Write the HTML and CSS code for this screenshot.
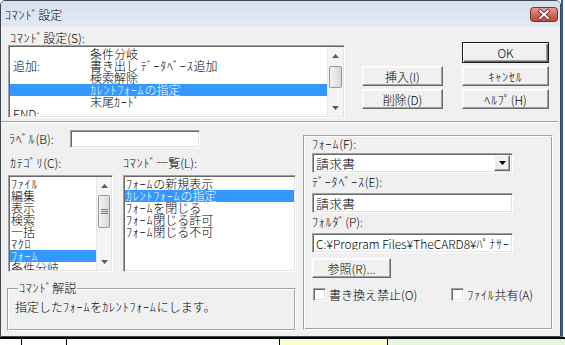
FILE: index.html
```html
<!DOCTYPE html>
<html lang="ja">
<head>
<meta charset="utf-8">
<title>ｺﾏﾝﾄﾞ設定</title>
<link rel="stylesheet" href="styles.css">
</head>
<body>
<div class="desktop">
  <div class="top-row">
    <div class="dialog">
      <div class="titlebar">
        <span class="title"><span class="hk">ｺﾏﾝﾄﾞ</span>設定</span>
        <span class="close">
          <svg width="28" height="15" viewBox="0 0 28 15">
            <defs>
              <linearGradient id="cg" x1="0" y1="0" x2="0" y2="1">
                <stop offset="0" stop-color="#e4a597"/>
                <stop offset="0.5" stop-color="#cf6a5c"/>
                <stop offset="1" stop-color="#c0493a"/>
              </linearGradient>
            </defs>
            <rect x="0.5" y="0.5" width="27" height="14" rx="3" fill="url(#cg)" stroke="#7d2f25"/>
            <path d="M10 4 L18 11 M18 4 L10 11" stroke="#5a1f18" stroke-width="3.4" stroke-linecap="square"/>
            <path d="M10 4 L18 11 M18 4 L10 11" stroke="#ffffff" stroke-width="2" stroke-linecap="square"/>
          </svg>
        </span>
      </div>
      <div class="client">
        <div class="upper">
          <div class="cmdset">
            <div class="lbl"><span class="hk">ｺﾏﾝﾄﾞ</span>設定(S):</div>
            <div class="listbox toplist">
              <div class="rows">
                <div class="row"><span class="c1"></span><span class="c2">条件分岐</span></div>
                <div class="row"><span class="c1">追加:</span><span class="c2">書き出し <span class="hk">ﾃﾞｰﾀﾍﾞｰｽ</span>追加</span></div>
                <div class="row"><span class="c1"></span><span class="c2">検索解除</span></div>
                <div class="row sel"><span class="c1"></span><span class="c2"><span class="hk">ｶﾚﾝﾄﾌｫｰﾑ</span>の指定</span></div>
                <div class="row"><span class="c1"></span><span class="c2">末尾<span class="hk">ｶｰﾄﾞ</span></span></div>
                <div class="row"><span class="c1">END:</span><span class="c2"></span></div>
              </div>
              <div class="vscroll">
                <div class="arrow up"><svg width="7" height="4" viewBox="0 0 7 4"><path d="M0 4 L3.5 0 L7 4 Z" fill="#5a5a5a"/></svg></div>
                <div class="track top-track1"></div>
                <div class="thumb"></div>
                <div class="track"></div>
                <div class="arrow down"><svg width="7" height="4" viewBox="0 0 7 4"><path d="M0 0 L3.5 4 L7 0 Z" fill="#5a5a5a"/></svg></div>
              </div>
            </div>
          </div>
          <div class="btncol btncol1">
            <div class="btn">挿入(I)</div>
            <div class="btn">削除(D)</div>
          </div>
          <div class="btncol btncol2">
            <div class="btn default">OK</div>
            <div class="btn"><span class="hk">ｷｬﾝｾﾙ</span></div>
            <div class="btn"><span class="hk">ﾍﾙﾌﾟ</span>(H)</div>
          </div>
        </div>
        <div class="sep"></div>
        <div class="lower">
          <div class="left">
            <div class="labelrow">
              <span class="lbl"><span class="hk">ﾗﾍﾞﾙ</span>(B):</span>
              <div class="field labelfield"></div>
            </div>
            <div class="lists">
              <div class="catcol">
                <div class="lbl"><span class="hk">ｶﾃｺﾞﾘ</span>(C):</div>
                <div class="listbox catlist">
                  <div class="rows">
                    <div class="row"><span class="hk">ﾌｧｲﾙ</span></div>
                    <div class="row">編集</div>
                    <div class="row">表示</div>
                    <div class="row">検索</div>
                    <div class="row">一括</div>
                    <div class="row"><span class="hk">ﾏｸﾛ</span></div>
                    <div class="row sel"><span class="hk">ﾌｫｰﾑ</span></div>
                    <div class="row">条件分岐</div>
                  </div>
                  <div class="vscroll">
                    <div class="arrow up"><svg width="7" height="4" viewBox="0 0 7 4"><path d="M0 4 L3.5 0 L7 4 Z" fill="#5a5a5a"/></svg></div>
                    <div class="track cat-track1"></div>
                    <div class="thumb grip"><span></span><span></span><span></span></div>
                    <div class="track"></div>
                    <div class="arrow down"><svg width="7" height="4" viewBox="0 0 7 4"><path d="M0 0 L3.5 4 L7 0 Z" fill="#5a5a5a"/></svg></div>
                  </div>
                </div>
              </div>
              <div class="cmdcol">
                <div class="lbl"><span class="hk">ｺﾏﾝﾄﾞ</span>一覧(L):</div>
                <div class="listbox cmdlist">
                  <div class="rows">
                    <div class="row"><span class="hk">ﾌｫｰﾑ</span>の新規表示</div>
                    <div class="row sel"><span class="hk">ｶﾚﾝﾄﾌｫｰﾑ</span>の指定</div>
                    <div class="row"><span class="hk">ﾌｫｰﾑ</span>を閉じる</div>
                    <div class="row"><span class="hk">ﾌｫｰﾑ</span>閉じる許可</div>
                    <div class="row"><span class="hk">ﾌｫｰﾑ</span>閉じる不可</div>
                  </div>
                </div>
              </div>
            </div>
            <fieldset class="desc">
              <legend><span class="hk">ｺﾏﾝﾄﾞ</span>解説</legend>
              <div class="desctext">指定した<span class="hk">ﾌｫｰﾑ</span>を<span class="hk">ｶﾚﾝﾄﾌｫｰﾑ</span>にします。</div>
            </fieldset>
          </div>
          <div class="panel">
            <div class="plbl"><span class="hk">ﾌｫｰﾑ</span>(F):</div>
            <div class="field combo">
              <span class="val">請求書</span>
              <span class="dd"><svg width="7" height="4" viewBox="0 0 7 4"><path d="M0 0 L3.5 4 L7 0 Z" fill="#000"/></svg></span>
            </div>
            <div class="plbl"><span class="hk">ﾃﾞｰﾀﾍﾞｰｽ</span>(E):</div>
            <div class="field pfield"><span class="val">請求書</span></div>
            <div class="plbl"><span class="hk">ﾌｫﾙﾀﾞ</span>(P):</div>
            <div class="field pfield path"><span class="val">C:¥Program Files¥TheCARD8¥<span class="hk">ﾊﾟﾅｻｰﾋﾞｽ</span></span></div>
            <div class="btn browse">参照(R)...</div>
            <div class="checks">
              <div class="check"><span class="box"></span><span>書き換え禁止(O)</span></div>
              <div class="check check2"><span class="box"></span><span><span class="hk">ﾌｧｲﾙ</span>共有(A)</span></div>
            </div>
          </div>
        </div>
      </div>
    </div>
    <div class="rightstrip"></div>
  </div>
  <div class="bottomstrip">
    <div class="cell c-a"></div>
    <div class="cell c-b"></div>
    <div class="cell c-c"></div>
    <div class="cell c-d"></div>
    <div class="cell c-e"></div>
  </div>
</div>
</body>
</html>
```

FILE: styles.css
```css
* { box-sizing: border-box; }
html, body { margin: 0; padding: 0; }
body {
  width: 565px;
  height: 345px;
  overflow: hidden;
  background: #ffffff;
  font-family: "Noto Sans CJK JP", "Noto Sans", sans-serif;
  font-size: 12px;
  font-weight: 300;
  line-height: 12px;
  color: #000;
}
.hk { letter-spacing: 0.8px; }
.desktop { width: 565px; height: 345px; display: flex; flex-direction: column; }
.top-row { display: flex; height: 337px; }

.dialog {
  width: 561px;
  height: 337px;
  border: 1px solid #404850;
  border-radius: 5px 5px 0 0;
  background: #f0f0f0;
  display: flex;
  flex-direction: column;
  overflow: hidden;
}
.titlebar {
  height: 26px;
  flex: none;
  display: flex;
  align-items: center;
  justify-content: space-between;
  padding: 1px 2px 0 4px;
  background: linear-gradient(#d7e1ed, #dde6f1 60%, #e3eaf3);
}
.title { font-size: 12px; color: #000; }
.close { display: flex; margin-right: 0; margin-top: -1px; }

.client { flex: 1; display: flex; flex-direction: column; }
.upper { height: 94px; display: flex; flex: none; }
.cmdset { margin-left: 7px; padding-top: 5px; width: 337px; }
.lbl { height: 12px; white-space: nowrap; }
.cmdset .lbl { margin-bottom: 1px; margin-left: 2px; }

.listbox {
  background: #fff;
  border: 1px solid;
  border-color: #a0a0a0 #ffffff #ffffff #a0a0a0;
  box-shadow: inset 1px 1px #696969, inset -1px -1px #e3e3e3;
  display: flex;
  overflow: hidden;
}
.rows { flex: 1; padding-top: 1px; overflow: hidden; }
.row { height: 12px; white-space: nowrap; display: flex; }
.row.sel { background: #3399ff; color: #fff; }

.toplist { height: 73px; padding: 1px; }
.toplist .c1 { width: 80px; padding-left: 3px; flex: none; }
.toplist .c2 { flex: none; }

.vscroll {
  width: 16px;
  flex: none;
  display: flex;
  flex-direction: column;
  background: #f4f4f4;
  border-left: 1px solid #e6e6e6;
}
.arrow { height: 17px; display: flex; align-items: center; justify-content: center; flex: none; }
.track { flex: 1; }
.top-track1 { flex: 0 0 2px; }
.thumb {
  flex: none;
  height: 22px;
  margin: 0 1px;
  border: 1px solid #979797;
  border-radius: 2px;
  background: linear-gradient(90deg, #f3f3f3, #e4e4e4 60%, #d6d6d6);
}
.cat-track1 { flex: 0 0 1px; }
.thumb.grip {
  height: 33px;
  display: flex;
  flex-direction: column;
  align-items: center;
  justify-content: center;
  gap: 1px;
}
.thumb.grip span { width: 7px; height: 1px; background: #7a7a7a; display: block; }

.btncol { display: flex; flex-direction: column; gap: 3px; }
.btncol1 { margin-left: 17px; width: 81px; padding-top: 39px; }
.btncol2 { margin-left: 19px; width: 87px; padding-top: 15px; }
.btn {
  height: 20px;
  display: flex;
  align-items: center;
  justify-content: center;
  background: #f0f0f0;
  border: 1px solid;
  border-color: #ffffff #696969 #696969 #ffffff;
  box-shadow: inset -1px -1px #a0a0a0, inset 1px 1px #f8f8f8;
  white-space: nowrap;
  padding-top: 1px;
}
.btn.default {
  height: 21px;
  border-color: #1a1a1a;
  box-shadow: inset 1px 1px #ffffff, inset -1px -1px #696969, inset -2px -2px #a0a0a0;
}

.sep {
  height: 2px;
  flex: none;
  border-top: 1px solid #a0a0a0;
  border-bottom: 1px solid #ffffff;
  margin-right: 2px;
}

.lower { flex: 1; display: flex; }
.left { margin-left: 7px; width: 288px; display: flex; flex-direction: column; }
.labelrow { display: flex; align-items: center; margin-top: 7px; height: 18px; }
.labelrow .lbl { width: 62px; padding-left: 1px; }
.field {
  background: #fff;
  border: 1px solid;
  border-color: #a0a0a0 #ffffff #ffffff #a0a0a0;
  box-shadow: inset 1px 1px #696969, inset -1px -1px #e3e3e3;
}
.labelfield { width: 130px; height: 18px; }

.lists { display: flex; margin-top: 9px; }
.catcol { width: 105px; }
.cmdcol { margin-left: 10px; width: 173px; }
.catcol .lbl, .cmdcol .lbl { margin-bottom: 6px; }
.catcol .lbl { padding-left: 2px; }
.catlist { height: 97px; padding: 1px; }
.catlist .vscroll { width: 15px; }
.catlist .row { padding-left: 1px; }
.cmdlist { height: 97px; padding: 1px; }
.cmdlist .row { padding-left: 1px; }

.desc {
  margin: 10px 0 0 -1px;
  padding: 0 0 0 7px;
  height: 49px;
  min-width: 0;
  border: 1px solid;
  border-color: #a0a0a0 #ffffff #ffffff #a0a0a0;
  box-shadow: inset 1px 1px #ffffff, inset -1px -1px #a0a0a0;
}
.desc legend { padding: 0 1px; margin-left: 3px; line-height: 12px; }
.desctext { margin-top: 7px; white-space: nowrap; }

.panel {
  margin-left: 7px;
  margin-top: 12px;
  width: 250px;
  height: 195px;
  border: 1px solid;
  border-color: #a0a0a0 #ffffff #ffffff #a0a0a0;
  box-shadow: inset 1px 1px #ffffff, inset -1px -1px #a0a0a0;
  padding: 2px 0 0 8px;
  display: flex;
  flex-direction: column;
  align-items: flex-start;
}
.plbl { height: 12px; white-space: nowrap; margin-top: 3px; }
.panel .plbl:first-child { margin-top: 0; }
.combo, .pfield {
  width: 201px;
  height: 20px;
  margin-top: 3px;
  display: flex;
  align-items: center;
  padding: 0 2px 0 3px;
  overflow: hidden;
  white-space: nowrap;
}
.pfield { margin-top: 5px; }
.val { flex: 1; padding-top: 1px; overflow: hidden; }
.combo .val { font-size: 13px; }
.pfield .val { font-size: 13px; }
.path .val { font-size: 12px; }
.dd {
  width: 16px;
  height: 16px;
  flex: none;
  display: flex;
  align-items: center;
  justify-content: center;
  background: #f0f0f0;
  border: 1px solid;
  border-color: #ffffff #696969 #696969 #ffffff;
  box-shadow: inset -1px -1px #a0a0a0;
}
.browse { width: 79px; margin-top: 5px; }
.checks { display: flex; margin-top: 10px; margin-left: 1px; }
.check { display: flex; align-items: center; gap: 3px; white-space: nowrap; }
.check2 { margin-left: 34px; }
.box {
  width: 13px;
  height: 13px;
  background: #fff;
  border: 1px solid;
  border-color: #a0a0a0 #ffffff #ffffff #a0a0a0;
  box-shadow: inset 1px 1px #696969, inset -1px -1px #e3e3e3;
}

.rightstrip {
  width: 4px;
  background: #ffffff;
  border-left: 2px solid #2a5caa;
}
.bottomstrip {
  flex: 1;
  display: flex;
  border-top: 2px solid #000;
}
.cell { height: 100%; border-right: 1px solid #000; background: #fff; }
.c-a { width: 22px; }
.c-b { width: 45px; }
.c-c { width: 213px; background: #fff; }
.c-d { width: 108px; background: #fdfbd2; }
.c-e { flex: 1; background: #e6f4e2; border-right: none; }
```
